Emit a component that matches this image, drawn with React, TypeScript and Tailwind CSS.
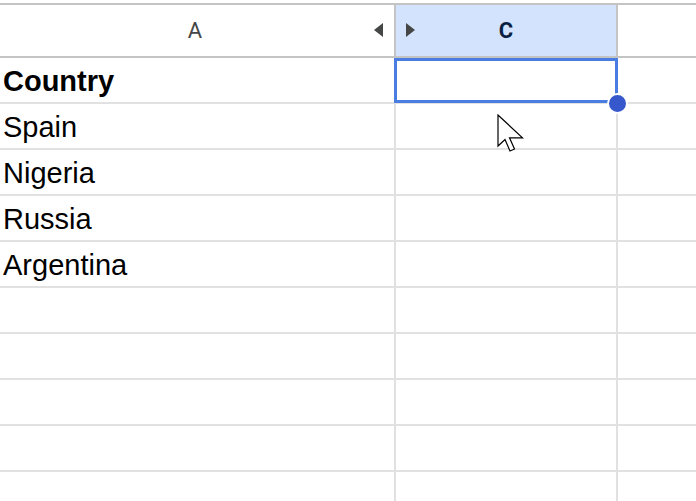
import React from 'react';

const rows = ['Country', 'Spain', 'Nigeria', 'Russia', 'Argentina', '', '', '', '', ''];

const Cursor = () => (
  <svg width="30" height="40" viewBox="0 0 30 40" className="absolute left-[497px] top-[114px]">
    <path
      d="M1 1 L1 32 L8 25.5 L13 37 L17.5 35 L12.5 23.8 L25.5 23.8 Z"
      fill="#ffffff"
      stroke="#000000"
      strokeWidth="1.2"
      strokeLinejoin="miter"
    />
  </svg>
);

const App: React.FC = () => {
  return (
    <div className="relative w-[696px] h-[501px] overflow-hidden bg-white pt-[3px]" style={{ fontFamily: '"Liberation Sans", Arial, sans-serif' }}>
      {/* column headers */}
      <div className="flex h-[55px] border-t-2 border-b-2 border-[#c4c4c4]">
        <div className="relative w-[396px] border-r-2 border-[#c4c4c4] flex items-center justify-center pr-[4px]">
          <span className="text-[22px] text-[#444746]" style={{ fontFamily: 'Roboto, sans-serif' }}>A</span>
          <svg width="9" height="14" viewBox="0 0 9 14" className="absolute left-[374px] top-[18px]">
            <path d="M9 0 L9 14 L0 7 Z" fill="#444746" />
          </svg>
        </div>
        <div className="relative w-[222px] bg-[#d3e3fd] border-r-2 border-[#c4c4c4] flex items-center justify-center">
          <span className="text-[22px] font-bold text-[#0b1f42]" style={{ fontFamily: 'Roboto, sans-serif' }}>C</span>
          <svg width="9" height="14" viewBox="0 0 9 14" className="absolute left-[10px] top-[18px]">
            <path d="M0 0 L0 14 L9 7 Z" fill="#444746" />
          </svg>
        </div>
        <div className="flex-1" />
      </div>

      {/* body rows */}
      {rows.map((r, i) => (
        <div key={i} className="flex h-[46px] border-b-2 border-[#e1e1e1]">
          <div className="w-[396px] border-r-2 border-[#e1e1e1] flex items-center pl-[3px] pt-[2px]">
            <span className={`text-[29px] leading-none text-black ${i === 0 ? 'font-bold' : ''}`}>{r}</span>
          </div>
          <div className="w-[222px] border-r-2 border-[#e1e1e1]" />
          <div className="flex-1" />
        </div>
      ))}

      {/* selection */}
      <div className="absolute left-[394px] top-[58px] w-[224px] h-[45px] border-[3px] border-[#4a7de1]" />
      <div className="absolute left-[607px] top-[93px] w-[21px] h-[21px] rounded-full bg-[#3658cc] border-2 border-white" />

      <Cursor />
    </div>
  );
};

export default App;
